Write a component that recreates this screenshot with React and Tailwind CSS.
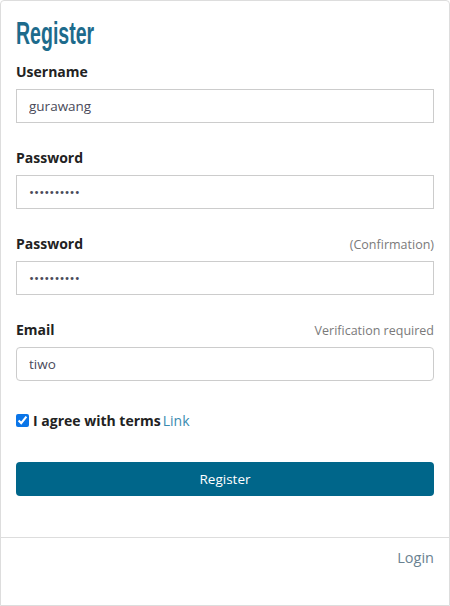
import React from "react";

const font = { fontFamily: '"Open Sans", "Noto Sans", sans-serif' };

function Field({ label, hint, type = "text", value, rounded }) {
  return (
    <div className="mb-[24px]">
      <div className="flex items-end justify-between h-[22px] mb-[6px]">
        <label className="text-[14px] font-bold text-[#222] leading-[22px]">{label}</label>
        {hint && <span className="text-[12.5px] text-[#7a7a7a] leading-[20px]">{hint}</span>}
      </div>
      <input
        type={type}
        defaultValue={value}
        readOnly
        className={`block w-full h-[34px] border border-[#cccccc] px-[12px] text-[13.5px] text-[#4a4a5a] outline-none ${rounded ? "rounded-[4px]" : ""}`}
      />
    </div>
  );
}

export default function App() {
  return (
    <div className="w-[450px] h-[606px] bg-white" style={font}>
      <div className="h-[606px] border border-[#dddddd] rounded-t-[4px] flex flex-col">
        <div className="px-[15px] pt-[12px] pb-[41px]">
          <h1
            className="text-[32px] leading-[40px] font-semibold text-[#1d6b8c] mb-[8px] origin-left scale-x-[0.61] w-fit"
            style={{ fontFamily: '"Liberation Sans", sans-serif' }}
          >
            Register
          </h1>
          <Field label="Username" value="gurawang" />
          <Field label="Password" type="password" value="1234567890" />
          <Field label="Password" hint="(Confirmation)" type="password" value="1234567890" />
          <Field label="Email" hint="Verification required" value="tiwo" rounded />
          <div className="flex items-center h-[22px] mt-[28px]">
            <input type="checkbox" defaultChecked className="w-[13px] h-[13px] m-0 mr-[4px] accent-[#0a75e8]" />
            <span className="text-[14px] font-bold text-[#222]">I agree with terms</span>
            <span className="text-[14px] text-[#3a8bb0] ml-[2px]">Link</span>
          </div>
          <button className="mt-[31px] w-full h-[34px] rounded-[4px] bg-[#00668a] text-white text-[13.5px]">
            Register
          </button>
        </div>
        <div className="border-t border-[#dddddd] px-[15px] pt-[9px] flex justify-end">
          <span className="text-[14.5px] text-[#6a8291]">Login</span>
        </div>
      </div>
    </div>
  );
}
